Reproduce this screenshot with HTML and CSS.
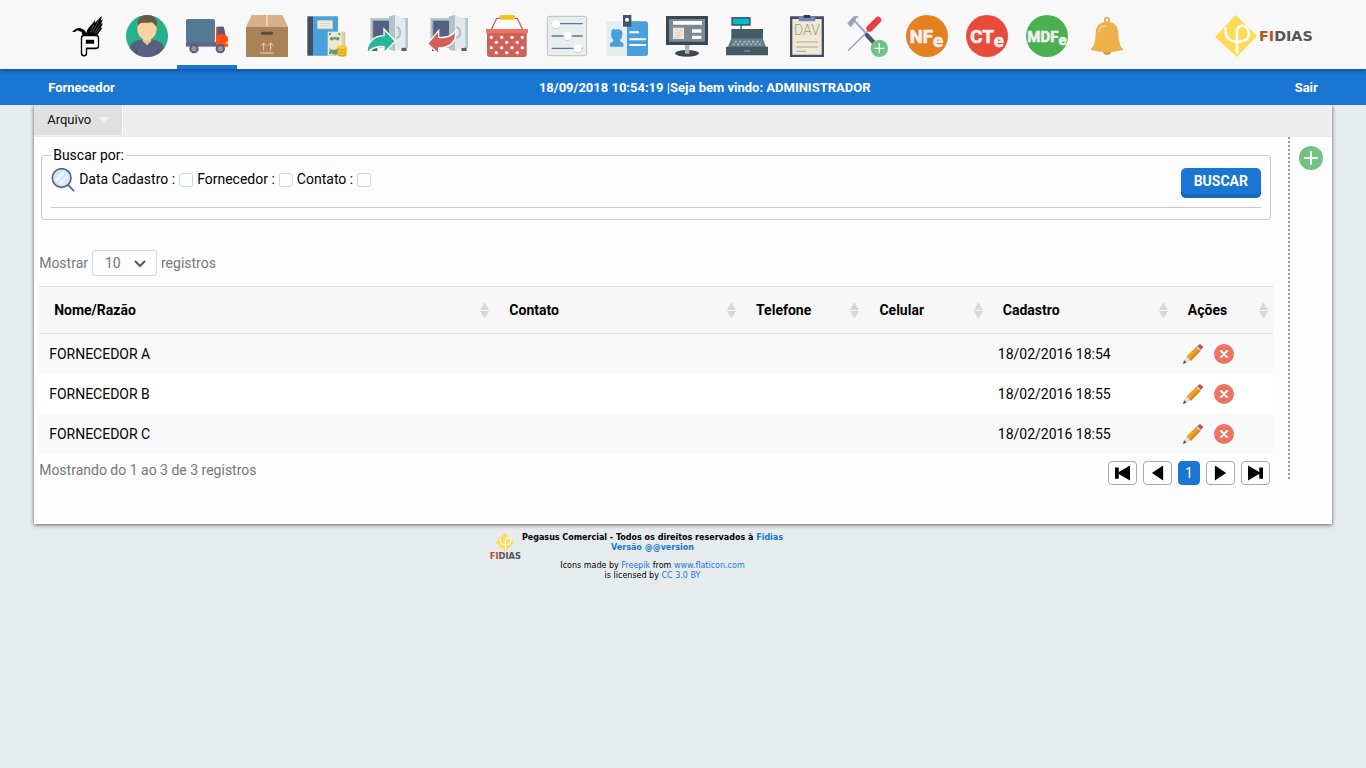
FILE: index.html
```html
<!DOCTYPE html>
<html lang="pt-br">
<head>
    <meta charset="UTF-8">
    <meta name="viewport" content="width=device-width, initial-scale=1.0">
    <title>Pegasus Comercial - Fornecedor</title>
    <link rel="stylesheet" href="styles.css">
</head>
<body>
    <svg class="sprite" aria-hidden="true">
        <symbol id="phi" viewBox="0 0 126 126">
            <path fill="#ffdc57" d="M62 0l64 62-60 64L0 66z"/>
            <path fill="none" stroke="#fff" stroke-width="8" stroke-linecap="round" d="M31 40c0 24 8 40 37 40 22 0 34-10 34-24 0-27-36-35-36-4v60"/>
        </symbol>
        <symbol id="safe" viewBox="0 0 126 126">
            <path fill="#546082" d="M18 98h16v10H18zM106 98h16v10h-16z"/>
            <path fill="#b7c7c9" d="M13 9h113v90H13z"/>
            <path fill="#95a5a5" d="M19 15h52v80H19z"/>
            <path fill="#546082" d="M22 18h50v76H22z"/>
            <path fill="#b3c3c5" d="M69 4l18-4v108l-18-4z"/>
            <path fill="#e3e9ed" d="M87 0l31 13v82l-31 13z"/>
            <path fill="none" stroke="#b3c3c5" stroke-width="7" d="M91 37c15-1 15 32 0 31"/>
        </symbol>
        <symbol id="plus" viewBox="0 0 24 24">
            <circle cx="12" cy="12" r="12" fill="#71c285"/>
            <path stroke="#fff" stroke-width="2" stroke-linecap="round" d="M12 6v12M6 12h12"/>
        </symbol>
        <symbol id="pencil" viewBox="0 0 60 60">
            <path fill="#ecdcc9" d="M3 48l9-12 12 12-13 8z"/>
            <path fill="#5a5a5a" d="M0 60l3-12 8 8z"/>
            <path fill="#efa02c" d="M11 37L42 6l13 13-31 31z"/>
            <path fill="#d88a22" d="M19 45L50 14l5 5-31 31z"/>
            <path fill="#ccd1d3" d="M39 9l4-4 13 13-4 4z"/>
            <path fill="#c7514c" d="M43 6l4-4q3-3 7 0l5 5q2 3-1 6l-4 4z"/>
        </symbol>
        <symbol id="remove" viewBox="0 0 20 20">
            <circle cx="10" cy="10" r="10" fill="#ee7262"/>
            <path stroke="#fff" stroke-width="2" stroke-linecap="round" d="M7 7l6 6M13 7l-6 6"/>
        </symbol>
    </svg>

    <header class="topo">
        <div class="container topo-inner">
            <nav class="modulos">
                <a href="#" aria-label="Pegasus">
                    <svg viewBox="0 0 126 126">
                        <path d="M18 51l10-9 12-4 14 6 8 9c0-16 18-22 26-41l-2 12 22-22-4 15 7-4-6 14 6-2-7 14 5-1-11 16-6 8-42 1-3-12-14-5-4 4z"/>
                        <path stroke="#f8f8f8" stroke-width="1" fill="none" d="M84 28L74 52M98 16L80 52M103 27L85 54M103 39L89 55"/>
                        <path stroke="#000" stroke-width="19" stroke-linejoin="round" stroke-linecap="round" d="M54 69h36v24H54zM54 69v46"/>
                        <path fill="none" stroke="#fff" stroke-width="11" stroke-linejoin="round" stroke-linecap="round" d="M54 69h36v23H54zM54 69v46"/>
                    </svg>
                </a>
                <a href="#" aria-label="Cliente">
                    <svg viewBox="0 0 126 126">
                        <circle cx="63" cy="63" r="63" fill="#26b08b"/>
                        <path fill="#576080" d="M11 99c4-16 18-25 36-25l16 16 16-16c18 0 32 9 36 25a63 63 0 0 1-104 0z"/>
                        <path fill="#464f6b" d="M28 101l5 5v12l-5-3zM98 101l-5 5v12l5-3z"/>
                        <path fill="#f3c494" d="M51 65h24v14L63 91 51 79z"/>
                        <path fill="#fbd3a1" d="M34 22h58v20c0 20-16 34-29 34S34 62 34 42z"/>
                        <path fill="#6b5a4a" d="M34 25C35 9 46 0 63 0s30 9 31 24l-3 14c-2-9-8-11-14-16-11 4-30-3-37 5-4 5-4 7-5 11z"/>
                    </svg>
                </a>
                <a href="#" class="ativo" aria-label="Fornecedor">
                    <svg viewBox="0 0 126 126">
                        <path fill="#646688" d="M0 80h90v15H0z"/>
                        <rect y="12" width="87" height="69" rx="5" fill="#547b93"/>
                        <path fill="#ff4f19" d="M90 35h23l6 26q7 3 7 10v24H90z"/>
                        <path fill="#5b5a75" d="M95 35h18l5 25-14-4-9 6z"/>
                        <path fill="#ffc928" d="M119 80h7v7h-7z"/>
                        <circle cx="24" cy="101" r="14" fill="#5b5a75"/>
                        <circle cx="24" cy="101" r="8" fill="#9694a6"/>
                        <circle cx="103" cy="101" r="14" fill="#5b5a75"/>
                        <circle cx="103" cy="101" r="8" fill="#9694a6"/>
                    </svg>
                </a>
                <a href="#" aria-label="Produto">
                    <svg viewBox="0 0 126 126">
                        <path fill="#d9af89" d="M17 0h92l17 35H0z"/>
                        <path fill="#ecd0b5" d="M60 0h6v35h-6z"/>
                        <path fill="#a98258" d="M0 35h126v91H0z"/>
                        <rect x="45" y="50" width="36" height="9" rx="4" fill="#5f4934"/>
                        <path fill="none" stroke="#f0d6ab" stroke-width="3" d="M53 106V84M45 92l8-8 8 8M74 106V84M66 92l8-8 8 8M43 114h40"/>
                    </svg>
                </a>
                <a href="#" aria-label="Caixa">
                    <svg viewBox="0 0 126 126">
                        <path fill="#444d62" d="M4 4h17v118H4z"/>
                        <path fill="#4aa0dc" d="M21 4h75v118H21z"/>
                        <path fill="#f1ecdb" stroke="#d6d3bc" stroke-width="3" d="M35 17h44v24H35z"/>
                        <path stroke="#d6d3bc" stroke-width="3" d="M42 25h30M42 33h30"/>
                        <path fill="#c9c8b2" d="M106 50h12v72h-12z"/>
                        <path fill="#ece8d3" d="M65 50h43v72H65z"/>
                        <path fill="#e0dcc4" d="M110 50h3v72h-3z"/>
                        <path fill="#6c9a62" d="M69 54h7q-1 7-7 8zM103 54h-7q1 7 7 8zM71 72c4-13 8 0 15-7 7 7 11-6 15 7l-6 5q-9-9-18 0zM71 99c5 6 9 5 15 5q6 0 10-5v18q-12 6-25-6zM69 118v-8q6 1 7 8z"/>
                        <path fill="#e0a51a" d="M95 96h27v22c0 10-27 10-27 0z"/>
                        <ellipse cx="108" cy="96" rx="14" ry="6" fill="#fbcb36"/>
                        <path fill="none" stroke="#fbcb36" stroke-width="4" d="M95 105q13 8 27 0M95 114q13 8 27 0"/>
                    </svg>
                </a>
                <a href="#" aria-label="Contas a receber">
                    <svg viewBox="0 0 126 126">
                        <use href="#safe" width="126" height="126"/>
                        <path fill="#25b799" stroke="#fff" stroke-width="4" d="M3 115C1 83 24 62 54 62V42l34 37-34 34V95c-20-2-38 4-51 20z"/>
                    </svg>
                </a>
                <a href="#" aria-label="Contas a pagar">
                    <svg viewBox="0 0 126 126">
                        <use href="#safe" width="126" height="126"/>
                        <path fill="#d2605a" stroke="#fff" stroke-width="4" d="M5 86l33-39v20c24 2 42-4 51-20 3 32-16 52-51 52v18z"/>
                    </svg>
                </a>
                <a href="#" aria-label="Compras">
                    <svg viewBox="0 0 126 126">
                        <path fill="none" stroke="#c75d58" stroke-width="4" d="M14 48L32 10h14M112 48L94 10H80"/>
                        <rect x="40" width="47" height="14" rx="6" fill="#f3c416"/>
                        <path fill="#d2605a" d="M3 54h119v64q0 8-8 8H11q-8 0-8-8z"/>
                        <path fill="#ec7563" d="M0 42h126v12H0z"/>
                        <g fill="#fff">
                            <circle cx="16" cy="67" r="5"/><circle cx="47" cy="67" r="5"/><circle cx="78" cy="67" r="5"/><circle cx="109" cy="67" r="5"/>
                            <circle cx="31" cy="82" r="5"/><circle cx="62" cy="82" r="5"/><circle cx="94" cy="82" r="5"/>
                            <circle cx="16" cy="98" r="5"/><circle cx="47" cy="98" r="5"/><circle cx="78" cy="98" r="5"/><circle cx="109" cy="98" r="5"/>
                            <circle cx="31" cy="113" r="5"/><circle cx="62" cy="113" r="5"/><circle cx="94" cy="113" r="5"/>
                        </g>
                    </svg>
                </a>
                <a href="#" aria-label="Ajustes">
                    <svg viewBox="0 0 126 126">
                        <rect x="4" y="4" width="118" height="118" rx="6" fill="#e8eeed" stroke="#bcbfbe" stroke-width="3"/>
                        <path stroke="#68709a" stroke-width="4" d="M17 26h93M17 63h93M17 100h93"/>
                        <g fill="#c9cecd"><circle cx="30" cy="30" r="12"/><circle cx="65" cy="66" r="12"/><circle cx="95" cy="103" r="12"/></g>
                        <g fill="#fff"><circle cx="30" cy="27" r="12"/><circle cx="65" cy="63" r="12"/><circle cx="95" cy="100" r="12"/></g>
                    </svg>
                </a>
                <a href="#" aria-label="Funcionário">
                    <svg viewBox="0 0 126 126">
                        <path fill="#e6edef" d="M8 19h55v104H8q-8 0-8-8V27q0-8 8-8z"/>
                        <path fill="#4aa0dc" d="M63 19h55q8 0 8 8v88q0 8-8 8H63z"/>
                        <path fill="#475066" d="M51 0h25v35H51z"/>
                        <circle cx="63" cy="14" r="6" fill="#fff"/>
                        <path fill="#4aa0dc" d="M17 44l8-3 4 3c14-4 22 2 20 17q-1 10-7 14v4l10 5v11H12V84l10-5v-4q-6-5-7-15z"/>
                        <path stroke="#fff" stroke-width="6" d="M70 52h29M70 73h50M70 90h50"/>
                    </svg>
                </a>
                <a href="#" aria-label="Relatórios">
                    <svg viewBox="0 0 126 126">
                        <ellipse cx="63" cy="115" rx="36" ry="10" fill="#3b4752"/>
                        <path fill="#aab5ba" d="M57 88h13v28H57z"/>
                        <path fill="#3b4752" d="M0 3h126v87H0z"/>
                        <path fill="#7b8a94" d="M9 12h108v68H9z"/>
                        <path fill="#fff" d="M21 18h87v11H21zM78 43h28v10H78zM78 62h28v10H78z"/>
                        <path fill="#f0e9d9" d="M21 38h33v34H21z"/>
                        <path stroke="#cdbf9f" stroke-width="2" d="M26 45h10M40 47h10M26 54h18M30 61h20M26 67h16"/>
                    </svg>
                </a>
                <a href="#" aria-label="Frente de caixa">
                    <svg viewBox="0 0 126 126">
                        <path fill="#607d8b" d="M43 30h5v14h-5z"/>
                        <path fill="#455a64" d="M16 6h58v26H16zM16 42h95v30H16z"/>
                        <path fill="#00bcd4" d="M21 11h48v16H21z"/>
                        <path fill="#607d8b" d="M16 70h94l10 26H6z"/>
                        <path stroke="#a9bac2" stroke-width="5" stroke-dasharray="7 6" d="M26 80h80M20 88h86"/>
                        <path fill="#455a64" d="M0 95h126v26H0z"/>
                        <path fill="#607d8b" d="M53 105h20v6H53z"/>
                    </svg>
                </a>
                <a href="#" aria-label="Documento auxiliar de venda">
                    <svg viewBox="0 0 126 126">
                        <path fill="#464e67" d="M12 4h102v122H12z"/>
                        <path fill="#eee9d6" d="M19 12h88v107H19z"/>
                        <path fill="#7386c0" d="M38 5h50v11q0 3-3 3H41q-3 0-3-3z"/>
                        <path fill="#333c4c" d="M53 0h20v9H53z"/>
                        <text x="63" y="60" class="txt-dav">DAV</text>
                        <path stroke="#aaa783" stroke-width="3" d="M30 81h66M30 96h66M30 109h30"/>
                    </svg>
                </a>
                <a href="#" aria-label="Ordem de serviço">
                    <svg viewBox="0 0 126 126">
                        <path stroke="#9aabc8" stroke-width="6" d="M26 18l38 41"/>
                        <path stroke="#9aabc8" stroke-width="5" stroke-linecap="round" d="M66 48L8 105"/>
                        <path stroke="#4d5566" stroke-width="13" stroke-linecap="round" d="M63 61l32 34"/>
                        <path fill="#93a3bd" d="M4 25L21 5q9-4 19 0l-9 5-3 9-14 18z"/>
                        <path stroke="#f23d43" stroke-width="20" stroke-linecap="round" d="M71 40l25-25"/>
                        <path stroke="#c92d37" stroke-width="2" d="M72 46l30-29M65 39l28-27"/>
                        <circle cx="100" cy="100" r="26" fill="#71c285"/>
                        <path stroke="#fff" stroke-width="4" d="M100 85v30M85 100h30"/>
                    </svg>
                </a>
                <a href="#" aria-label="Nota fiscal eletrônica">
                    <svg viewBox="0 0 126 126">
                        <circle cx="63" cy="63" r="63" fill="#e58021"/>
                        <text x="11" y="83" class="txt-sigla">NF<tspan dy="12">e</tspan></text>
                    </svg>
                </a>
                <a href="#" aria-label="Conhecimento de transporte eletrônico">
                    <svg viewBox="0 0 126 126">
                        <circle cx="63" cy="63" r="63" fill="#e84b3c"/>
                        <text x="13" y="83" class="txt-sigla">CT<tspan dy="12">e</tspan></text>
                    </svg>
                </a>
                <a href="#" aria-label="Manifesto eletrônico">
                    <svg viewBox="0 0 126 126">
                        <circle cx="63" cy="63" r="63" fill="#4bb04f"/>
                        <text x="4" y="80" class="txt-sigla menor">MDF<tspan dy="10">e</tspan></text>
                    </svg>
                </a>
                <a href="#" aria-label="Avisos">
                    <svg viewBox="0 0 126 126">
                        <circle cx="63" cy="15" r="7" fill="none" stroke="#dc9a35" stroke-width="4"/>
                        <circle cx="63" cy="107" r="13" fill="#dc9a35"/>
                        <path fill="#efaf4b" d="M63 20c25 0 33 15 34 34 1 23 2 36 14 47v4c-28 8-68 8-96 0v-4c12-11 13-24 14-47 1-19 9-34 34-34z"/>
                        <path fill="none" stroke="#fbd08c" stroke-width="4" stroke-linecap="round" d="M39 51c0-13 7-18 20-18"/>
                    </svg>
                </a>
            </nav>
            <a href="#" class="logo" aria-label="Fidias">
                <svg viewBox="0 0 300 126">
                    <use href="#phi" width="126" height="126"/>
                    <text x="132" y="78" class="txt-logo"><tspan class="laranja">FI</tspan>DIAS</text>
                </svg>
            </a>
        </div>
    </header>

    <div class="barra">
        <div class="container barra-inner">
            <span>Fornecedor</span>
            <span>18/09/2018 10:54:19 |Seja bem vindo: ADMINISTRADOR</span>
            <a href="#">Sair</a>
        </div>
    </div>

    <main class="container painel">
        <div class="menu">
            <button type="button" class="menu-item">Arquivo<span class="seta"></span></button>
        </div>
        <div class="corpo">
            <section class="conteudo">
                <form>
                    <fieldset class="busca">
                        <legend>Buscar por:</legend>
                        <div class="busca-linha">
                            <svg class="lupa" viewBox="0 0 72 72">
                                <path stroke="#5b6180" stroke-width="5" stroke-linecap="round" d="M50 50l18 18"/>
                                <circle cx="32" cy="30" r="28" fill="#cfe6f8" stroke="#5b6180" stroke-width="5"/>
                                <path stroke="#ebf5fd" stroke-width="9" d="M14 39l27-27M26 48l24-24"/>
                            </svg>
                            <label for="data">Data Cadastro :</label>
                            <input type="checkbox" id="data">
                            <label for="fornecedor">Fornecedor :</label>
                            <input type="checkbox" id="fornecedor">
                            <label for="contato">Contato :</label>
                            <input type="checkbox" id="contato">
                            <button type="button" class="btn-buscar">BUSCAR</button>
                        </div>
                        <hr>
                    </fieldset>
                </form>

                <div class="mostrar">
                    <label for="qtd">Mostrar</label>
                    <select id="qtd">
                        <option>10</option>
                        <option>25</option>
                        <option>50</option>
                    </select>
                    <span>registros</span>
                </div>

                <table class="tabela">
                    <colgroup>
                        <col>
                        <col class="c-contato">
                        <col class="c-fone">
                        <col class="c-fone">
                        <col class="c-cadastro">
                        <col class="c-acoes">
                    </colgroup>
                    <thead>
                        <tr>
                            <th>Nome/Razão</th>
                            <th>Contato</th>
                            <th>Telefone</th>
                            <th>Celular</th>
                            <th>Cadastro</th>
                            <th>Ações</th>
                        </tr>
                    </thead>
                    <tbody>
                        <tr>
                            <td>FORNECEDOR A</td>
                            <td></td>
                            <td></td>
                            <td></td>
                            <td>18/02/2016 18:54</td>
                            <td>
                                <div class="acoes">
                                    <button type="button" aria-label="Editar"><svg><use href="#pencil"/></svg></button>
                                    <button type="button" aria-label="Excluir"><svg><use href="#remove"/></svg></button>
                                </div>
                            </td>
                        </tr>
                        <tr>
                            <td>FORNECEDOR B</td>
                            <td></td>
                            <td></td>
                            <td></td>
                            <td>18/02/2016 18:55</td>
                            <td>
                                <div class="acoes">
                                    <button type="button" aria-label="Editar"><svg><use href="#pencil"/></svg></button>
                                    <button type="button" aria-label="Excluir"><svg><use href="#remove"/></svg></button>
                                </div>
                            </td>
                        </tr>
                        <tr>
                            <td>FORNECEDOR C</td>
                            <td></td>
                            <td></td>
                            <td></td>
                            <td>18/02/2016 18:55</td>
                            <td>
                                <div class="acoes">
                                    <button type="button" aria-label="Editar"><svg><use href="#pencil"/></svg></button>
                                    <button type="button" aria-label="Excluir"><svg><use href="#remove"/></svg></button>
                                </div>
                            </td>
                        </tr>
                    </tbody>
                </table>

                <div class="rodape-tabela">
                    <span>Mostrando do 1 ao 3 de 3 registros</span>
                    <div class="paginas">
                        <button type="button" aria-label="Primeira"><svg viewBox="0 0 16 16"><path d="M0 2h4v5l12-7v16L4 9v5H0z"/></svg></button>
                        <button type="button" aria-label="Anterior"><svg viewBox="0 0 16 16"><path d="M14 0v16L2 8z"/></svg></button>
                        <button type="button" class="atual">1</button>
                        <button type="button" aria-label="Próxima"><svg viewBox="0 0 16 16"><path d="M2 0v16l12-8z"/></svg></button>
                        <button type="button" aria-label="Última"><svg viewBox="0 0 16 16"><path d="M16 2h-4v5L0 0v16l12-7v5h4z"/></svg></button>
                    </div>
                </div>
            </section>
            <aside class="lateral">
                <button type="button" aria-label="Novo fornecedor"><svg><use href="#plus"/></svg></button>
            </aside>
        </div>
    </main>

    <footer class="rodape">
        <svg class="rodape-logo" viewBox="0 0 99 87">
            <use href="#phi" x="20" width="56" height="56"/>
            <text x="49" y="79" class="txt-logo-menor"><tspan class="laranja">FI</tspan>DIAS</text>
        </svg>
        <div>
            <p class="negrito">Pegasus Comercial - Todos os direitos reservados à <a href="#">Fidias</a><br><a href="#">Versão @@version</a></p>
            <p>Icons made by <a href="#">Freepik</a> from <a href="#">www.flaticon.com</a><br>is licensed by <a href="#">CC 3.0 BY</a></p>
        </div>
    </footer>
</body>
</html>
```

FILE: styles.css
```css
* {
    box-sizing: border-box;
}
body {
    margin: 0;
    background: #e6ebee;
    font-family: Roboto, sans-serif;
    font-size: 14px;
    line-height: 16px;
    color: #000;
}
a {
    color: #1976d2;
    text-decoration: none;
}
button {
    font-family: inherit;
    cursor: pointer;
}
.sprite {
    display: none;
}
.container {
    width: 95%;
    margin: 0 auto;
}

/* topo */
.topo {
    position: relative;
    background: #f8f8f8;
    box-shadow: 0 1px 4px rgba(0, 0, 0, 0.4);
}
.topo-inner {
    display: flex;
    justify-content: space-between;
    align-items: center;
    padding: 0 17px 0 23px;
}
.modulos {
    display: flex;
}
.modulos a {
    width: 60px;
    height: 69px;
    padding: 15px 9px 8px;
    border-bottom: 4px solid transparent;
}
.modulos a.ativo {
    border-bottom-color: #1976d2;
}
.modulos svg {
    display: block;
    width: 42px;
    height: 42px;
}
.logo svg {
    display: block;
    width: 100px;
    height: 42px;
    margin-top: 3px;
}
.txt-dav {
    font-size: 42px;
    font-weight: 300;
    fill: #a09d78;
    text-anchor: middle;
}
.txt-sigla {
    font-size: 56px;
    font-weight: bold;
    fill: #f0f0f0;
    stroke: #f0f0f0;
    stroke-width: 2px;
}
.txt-sigla.menor {
    font-size: 45px;
}
.txt-logo, .txt-logo-menor {
    font-family: "DejaVu Sans", sans-serif;
    font-size: 43px;
    font-weight: bold;
    fill: #555;
}
.txt-logo-menor {
    font-size: 25px;
    text-anchor: middle;
}
.laranja {
    fill: #b5541c;
}

/* barra azul */
.barra {
    background: #1976d2;
}
.barra-inner {
    display: flex;
    justify-content: space-between;
    padding: 11px 14px 9px;
    color: #fff;
    font-size: 13px;
    font-weight: bold;
}
.barra-inner a {
    color: #fff;
}

/* painel */
.painel {
    background: #fdfdfd;
    padding-bottom: 39px;
    box-shadow: 0 1px 4px rgba(0, 0, 0, 0.6);
    clip-path: inset(0 -8px -8px -8px);
}
.menu {
    display: flex;
    background: #eee;
    border-bottom: 1px solid #e6ebea;
    padding-bottom: 1px;
}
.menu-item {
    display: flex;
    align-items: center;
    gap: 8px;
    height: 30px;
    padding: 0 13px 2px;
    border: none;
    border-right: 1px solid #fff;
    background: #e0e0e0;
    font-size: 13px;
    color: #111;
}
.seta {
    border: 5px solid transparent;
    border-top-color: #f2f2f2;
    border-bottom: none;
}
.corpo {
    display: flex;
}
.conteudo {
    flex: 1;
    padding: 10px 15px 0 5px;
}
.lateral {
    width: 44px;
    margin-bottom: 6px;
    padding: 9px;
    border-left: 2px dotted #999;
}
.lateral button, .acoes button {
    display: block;
    padding: 0;
    border: none;
    background: none;
}
.lateral svg {
    display: block;
    width: 24px;
    height: 24px;
}

/* busca */
.busca {
    margin: 0 2px;
    padding: 5px 9px 11px;
    border: 1px solid #c8c8c8;
    border-radius: 3px;
}
.busca legend {
    padding: 0 2px;
}
.busca-linha {
    display: flex;
    gap: 4px;
}
.busca-linha label {
    line-height: 22px;
}
.busca-linha input {
    appearance: none;
    width: 14px;
    height: 14px;
    margin: 5px 0 0;
    border: 1px solid #cdd5e8;
    border-radius: 3px;
    background: #fff;
}
.lupa {
    width: 24px;
    height: 24px;
}
.btn-buscar {
    width: 80px;
    height: 30px;
    margin-left: auto;
    padding: 0 0 4px;
    border: none;
    border-radius: 5px;
    background: #1976d2;
    box-shadow: inset 0 -4px 0 #1668b8;
    color: #fff;
    font-size: 14px;
    font-weight: bold;
}
.busca hr {
    margin: 9px 0 0;
    border: none;
    border-top: 1px solid #c8c8c8;
}

/* tabela */
.mostrar {
    display: flex;
    align-items: center;
    gap: 4px;
    margin: 30px 0 10px;
    color: #777;
}
.mostrar select {
    appearance: none;
    width: 65px;
    height: 26px;
    padding: 0 12px;
    border: 1px solid #cdd5e8;
    border-radius: 3px;
    background: #fdfdfd url("data:image/svg+xml,%3Csvg xmlns='http://www.w3.org/2000/svg' width='12' height='7'%3E%3Cpath d='M1 1l5 5 5-5' fill='none' stroke='%23555' stroke-width='2'/%3E%3C/svg%3E") no-repeat right 10px center;
    font-family: inherit;
    font-size: 14px;
    color: #777;
}
.tabela {
    width: 100%;
    table-layout: fixed;
    border-collapse: separate;
    border-spacing: 0;
}
.c-contato {
    width: 20%;
}
.c-fone {
    width: 10%;
}
.c-cadastro {
    width: 15%;
}
.c-acoes {
    width: 100px;
}
.tabela th {
    height: 48px;
    padding: 0 15px;
    border-top: 1px solid #e2e2e2;
    border-bottom: 1px solid #e2e2e2;
    background: #f7f7f7 url("data:image/svg+xml,%3Csvg xmlns='http://www.w3.org/2000/svg' width='9' height='15'%3E%3Cpath d='M0 7l4-7h1l4 7zM0 8h9l-4 7h-1z' fill='%23d8d8d8'/%3E%3C/svg%3E") no-repeat right 5px center;
    text-align: left;
    font-weight: bold;
}
.tabela td {
    height: 40px;
    padding: 0 10px;
    background: #fff;
}
.tabela tbody tr:nth-child(odd) td {
    background: #f9f9f9;
}
.acoes {
    display: flex;
    gap: 11px;
}
.acoes svg {
    display: block;
    width: 20px;
    height: 20px;
}
.rodape-tabela {
    display: flex;
    justify-content: space-between;
    padding: 7px 3px 0 0;
    line-height: 18px;
    color: #777;
}
.paginas {
    display: flex;
    gap: 6px;
}
.paginas button {
    display: flex;
    align-items: center;
    justify-content: center;
    height: 24px;
    padding: 0 6px;
    border: 1px solid #aaa;
    border-radius: 4px;
    background: #fff;
    font-size: 14px;
}
.paginas svg {
    width: 15px;
    height: 16px;
}
.paginas .atual {
    border-color: #1976d2;
    background: #1976d2;
    color: #fff;
}

/* rodape */
.rodape {
    display: flex;
    justify-content: center;
    padding: 9px 94px 0 0;
    font-family: "DejaVu Sans", sans-serif;
    font-size: 8px;
    line-height: 10px;
    text-align: center;
}
.rodape-logo {
    width: 33px;
    height: 29px;
}
.rodape p {
    margin: 0 0 8px;
}
.rodape .negrito {
    font-weight: bold;
}
```
